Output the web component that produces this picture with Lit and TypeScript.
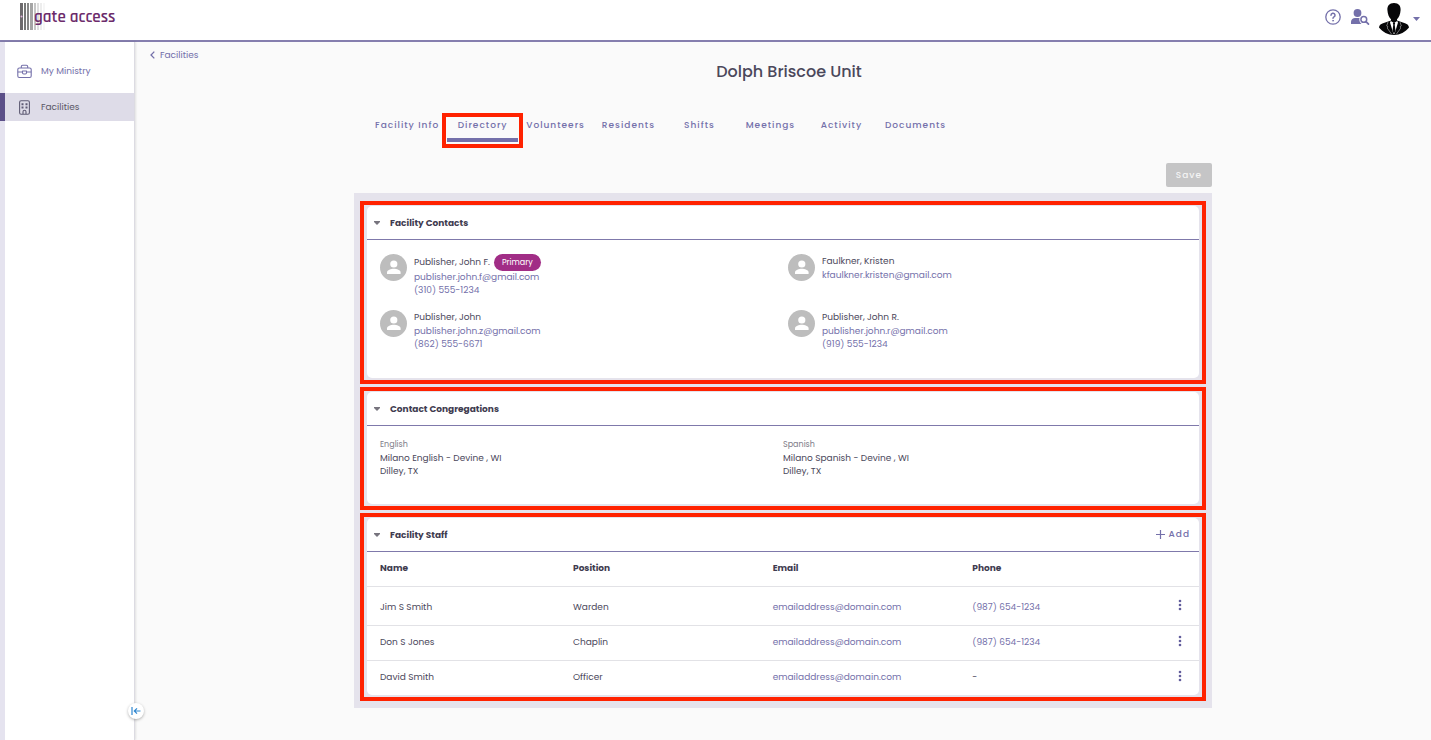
import { LitElement, html, css, svg, nothing } from "lit";
import { customElement, property, state } from "lit/decorators.js";
import { classMap } from "lit/directives/class-map.js";

interface Contact {
  name: string;
  email: string;
  phone?: string;
  primary?: boolean;
}

const contacts: Contact[] = [
  { name: "Publisher, John F.", email: "publisher.john.f@gmail.com", phone: "(310) 555-1234", primary: true },
  { name: "Faulkner, Kristen", email: "kfaulkner.kristen@gmail.com" },
  { name: "Publisher, John", email: "publisher.john.z@gmail.com", phone: "(862) 555-6671" },
  { name: "Publisher, John R.", email: "publisher.john.r@gmail.com", phone: "(919) 555-1234" },
];

const congregations = [
  { language: "English", name: "Milano English - Devine , WI", city: "Dilley, TX" },
  { language: "Spanish", name: "Milano Spanish - Devine , WI", city: "Dilley, TX" },
];

const staff = [
  { name: "Jim S Smith", position: "Warden", email: "emailaddress@domain.com", phone: "(987) 654-1234" },
  { name: "Don S Jones", position: "Chaplin", email: "emailaddress@domain.com", phone: "(987) 654-1234" },
  { name: "David Smith", position: "Officer", email: "emailaddress@domain.com", phone: "" },
];

const tabs = ["Facility Info", "Directory", "Volunteers", "Residents", "Shifts", "Meetings", "Activity", "Documents"];

const tel = (phone: string) => "tel:" + phone.replace(/\D/g, "");

const base = css`
  * { box-sizing: border-box; }
  a { color: #7470aa; text-decoration: none; }
  button {
    margin: 0;
    padding: 0;
    border: 0;
    background: none;
    color: #7470aa;
    font: inherit;
    cursor: pointer;
  }
  svg { display: block; }
`;

@customElement("app-header")
class AppHeader extends LitElement {
  static styles = [base, css`
    :host {
      display: flex;
      align-items: flex-start;
      justify-content: space-between;
      height: 42px;
      padding: 3px 11px 0 20px;
      background: #fff;
      border-bottom: 2px solid #857eae;
    }
    .logo { display: flex; align-items: center; }
    .bars { margin-right: -12px; }
    .word {
      z-index: 1;
      color: #6c2b6b;
      font: 600 17px/26px "Rajdhani", "Roboto Condensed", "DejaVu Sans Condensed", sans-serif;
    }
    .actions { display: flex; align-items: flex-start; }
    .help { margin: 6px 9px 0 0; }
    .search { margin: 5px 9px 0 0; }
    .profile { display: flex; align-items: center; gap: 4px; }
  `];

  render() {
    return html`
      <a class="logo" href="#" aria-label="gate access">
        <svg class="bars" width="26" height="27" viewBox="0 0 26 27">
          <rect x="0" width="3" height="27" fill="#6d6a6d" />
          <rect x="4" width="2" height="27" fill="#777" />
          <rect x="7" width="2" height="27" fill="#868686" />
          <rect x="10" width="3" height="27" fill="#a5a5a5" />
          <rect x="14" width="2" height="27" fill="#c6c6c6" />
          <rect x="17" width="2" height="27" fill="#dedede" />
          <rect x="20" width="2" height="27" fill="#ededed" />
          <rect x="23" width="2" height="27" fill="#f6f6f6" />
          <circle cx="1.5" cy="13.500" r="1" fill="#e3b6df" />
        </svg>
        <span class="word">gate access</span>
      </a>
      <div class="actions">
        <button class="help" aria-label="Help">
          <svg width="16" height="16" viewBox="0 0 16 16" fill="none" stroke="#7470aa" stroke-linecap="round">
            <circle cx="8" cy="8" r="7.200" stroke-width="1.300" />
            <path d="M6 6.200a2 2 0 1 1 3 1.700c-.7.4-1 .8-1 1.400" stroke-width="1.500" />
            <circle cx="8" cy="11.700" r=".5" fill="#7470aa" stroke-width=".7" />
          </svg>
        </button>
        <button class="search" aria-label="Find person">
          <svg width="20" height="18" viewBox="0 0 20 18">
            <circle cx="7.500" cy="5" r="3.900" fill="#7470aa" />
            <path d="M1 16v-2.200C1 11.300 3 10 5 10h4.500c-.6 2.300.2 4.500 2 6z" fill="#7470aa" />
            <circle cx="13.800" cy="11.400" r="2.900" fill="#fff" stroke="#7470aa" stroke-width="1.500" />
            <path d="m16 13.600 2.500 2.500" stroke="#7470aa" stroke-width="1.700" stroke-linecap="round" />
          </svg>
        </button>
        <button class="profile" aria-label="Account menu">
          <svg width="30" height="32" viewBox="0 0 30 32">
            <path d="M15 0c-4.800 0-6.800 3.200-6.600 7 .2 4.500 1.800 7.500 3.600 9.200v1.300L4 20.200C1.500 21 .3 22.300 0 24.500 3.500 29 9 32 15 32s11.500-3 15-7.500c-.3-2.200-1.500-3.500-4-4.300l-8-2.700v-1.300c1.800-1.700 3.400-4.700 3.600-9.200.2-3.800-1.800-7-6.600-7z" fill="#060608" />
            <path d="M11.800 18 15 20l3.200-2 .8 1.500L15.500 31h-1L11 19.500z" fill="#fff" />
            <path d="m13.800 20 1.200-.6 1.200.6-.5 1.700.8 6L15 31l-1.500-3.300.8-6z" fill="#060608" />
            <path d="m9 19-1.300 4 1.300.8-.8 1.200 4.300 6M21 19l1.300 4-1.300.8.800 1.200-4.300 6" fill="none" stroke="#d8d8d8" stroke-width=".5" />
          </svg>
          <svg width="7" height="4" viewBox="0 0 7 4"><path d="M0 0h7L3.500 4z" fill="#7470aa" /></svg>
        </button>
      </div>
    `;
  }
}

@customElement("app-sidebar")
class AppSidebar extends LitElement {
  static styles = [base, css`
    :host {
      display: block;
      position: relative;
      background: #fff;
      border-right: 1px solid #dcdbe2;
      box-shadow: 1px 0 2px #0000001a;
    }
    nav {
      display: flex;
      flex-direction: column;
      gap: 8px;
      height: 100%;
      padding-top: 15px;
      background: linear-gradient(90deg, #e5e3ef 5px, transparent 5px);
    }
    .item {
      display: flex;
      align-items: center;
      gap: 9px;
      height: 28px;
      padding-left: 12px;
      border-left: 5px solid transparent;
    }
    .item.on { background: #dedce8; border-color: #5b4f88; color: #5a5766; }
    .collapse {
      position: absolute;
      right: -10px;
      bottom: 21px;
      display: grid;
      place-items: center;
      width: 16px;
      height: 16px;
      border-radius: 50%;
      background: #fff;
      box-shadow: 0 1px 3px #0000004d;
    }
  `];

  render() {
    return html`
      <nav>
        <a class="item" href="#ministry">
          <svg width="15" height="15" viewBox="0 0 15 15" fill="none" stroke="#7470aa" stroke-width="1.100" stroke-linejoin="round">
            <rect x=".8" y="4" width="13.400" height="9.500" rx="1.500" />
            <path d="M4.300 4V2.600c0-.8.5-1.300 1.300-1.300h3.800c.8 0 1.300.5 1.300 1.300V4M.8 8h4.700M9.500 8h4.700M5.500 7h4v1.800c0 .8-.5 1.200-1.200 1.200H6.700c-.7 0-1.200-.4-1.200-1.200z" />
          </svg>
          My Ministry
        </a>
        <a class="item on" href="#facilities">
          <svg width="15" height="15" viewBox="0 0 15 15" fill="none" stroke="#5f5b74">
            <rect x="2.600" y=".8" width="9.800" height="13.400" rx="1.500" stroke-width="1.100" />
            <path d="M6 14v-2.200a1.500 1.500 0 0 1 3 0V14" stroke-width="1.100" />
            <path d="M4.500 4.200h2M8.500 4.200h2M4.500 7.600h2M8.500 7.600h2" stroke-width="2" />
          </svg>
          Facilities
        </a>
      </nav>
      <button class="collapse" aria-label="Collapse menu">
        <svg width="10" height="8" viewBox="0 0 10 8" fill="none" stroke="#2f87d0" stroke-width="1.200">
          <path d="M1 0v8M9.500 4h-6M6 1.300 3.300 4 6 6.700" />
        </svg>
      </button>
    `;
  }
}

@customElement("info-card")
class InfoCard extends LitElement {
  @property() heading = "";
  @property({ type: Boolean }) addable = false;
  @state() private open = true;

  static styles = [base, css`
    :host {
      display: block;
      padding: 1px 3px 2px;
      border: 4px solid #ff2200;
    }
    .card { background: #fff; border-radius: 5px; overflow: hidden; }
    header {
      display: flex;
      align-items: center;
      justify-content: space-between;
      height: 34px;
      padding: 0 9px 0 7px;
      border-bottom: 1px solid #7f79ab;
    }
    h2 { margin: 0; font-size: 9px; line-height: 16px; font-weight: 700; }
    .toggle { display: flex; align-items: center; gap: 10px; color: #3f3c50; }
    .add { display: flex; align-items: center; gap: 4px; letter-spacing: 1px; font-weight: 500; }
  `];

  render() {
    return html`
      <section class="card">
        <header>
          <h2>
            <button class="toggle" aria-expanded=${this.open} @click=${() => (this.open = !this.open)}>
              <svg width="6" height="4" viewBox="0 0 6 4"><path d="M0 0h6v1L3 4 0 1z" fill="#77747e" /></svg>
              ${this.heading}
            </button>
          </h2>
          ${this.addable
            ? html`<button class="add">
                <svg width="9" height="9" viewBox="0 0 9 9" stroke="#7470aa" stroke-width="1.200"><path d="M4.500 0v9M0 4.500h9" /></svg>
                Add
              </button>`
            : nothing}
        </header>
        ${this.open ? html`<slot></slot>` : nothing}
      </section>
    `;
  }
}

@customElement("app-root")
class AppRoot extends LitElement {
  @state() private active = "Directory";

  static styles = [base, css`
    :host {
      display: grid;
      grid-template-rows: auto 1fr;
      grid-template-columns: 135px 1fr;
      min-height: 100vh;
      background: #fafafa;
      color: #4b485b;
      font: 9px/13px Poppins, Inter, "Open Sans", sans-serif;
    }
    app-header { grid-column: 1 / -1; }
    main { padding: 6px 15px 24px; }
    .crumb { display: flex; width: fit-content; align-items: center; gap: 5px; height: 14px; }
    h1 {
      margin: 0 0 30px;
      padding-left: 12px;
      font-size: 16px;
      line-height: 20px;
      font-weight: 500;
      text-align: center;
    }
    .content { max-width: 858px; margin: 0 auto; }
    .tabs { display: flex; height: 30px; padding-left: 13px; }
    .tab {
      position: relative;
      min-width: 71px;
      padding: 0 8px;
      border-bottom: 4px solid transparent;
      font-weight: 500;
      letter-spacing: 1px;
      white-space: nowrap;
    }
    .tab.on { border-color: #7470aa; }
    .tab.on::after {
      content: "";
      position: absolute;
      inset: 1px -5px -10px;
      border: 4px solid #ff2200;
    }
    .bar { display: flex; justify-content: flex-end; margin: 21px 0 6px; }
    .save {
      height: 24px;
      padding: 0 10px;
      border-radius: 2px;
      background: #c5c5c6;
      color: #f4f4f4;
      font-weight: 500;
      letter-spacing: 1px;
    }
    .panel {
      display: flex;
      flex-direction: column;
      gap: 3px;
      padding: 8px 6px 7px;
      background: #e5e3ec;
    }
    .contacts {
      display: grid;
      grid-template-columns: 1fr 1fr;
      gap: 13px 10px;
      padding: 14px 13px 27px;
    }
    .contact { display: flex; align-items: flex-start; gap: 7px; }
    .lines { display: flex; flex-direction: column; align-items: flex-start; }
    .who { display: flex; align-items: center; gap: 4px; min-height: 15px; }
    .badge {
      padding: 0 8px;
      border-radius: 9px;
      background: #a12d86;
      color: #fff;
      font-size: 8px;
      line-height: 17px;
    }
    .congs { display: grid; grid-template-columns: 1fr 1fr; padding: 12px 13px 26px; }
    .lang { color: #7e7c88; font-size: 8px; line-height: 14px; }
    table { width: 100%; border-collapse: collapse; table-layout: fixed; }
    th, td { height: 35px; padding: 0 0 0 13px; text-align: left; border-top: 1px solid #e2e2e6; }
    th { height: 34px; border-top: 0; font-weight: 700; color: #3f3c50; }
    .first td { height: 39px; padding-top: 3px; }
    .c1 { width: 23.2%; }
    .c2 { width: 24%; }
    .menu { display: block; padding: 0 6px 4px; }
  `];

  private contact(c: Contact) {
    return html`
      <div class="contact">
        <svg width="27" height="27" viewBox="0 0 27 27">
          <circle cx="13.500" cy="13.500" r="13.500" fill="#bdbdbd" />
          <circle cx="13.800" cy="10" r="3.600" fill="#fff" />
          <path d="M7 20v-1.500c0-2.500 4-3.700 6.800-3.700s6.800 1.200 6.800 3.700V20z" fill="#fff" />
        </svg>
        <div class="lines">
          <div class="who">${c.name}${c.primary ? html`<span class="badge">Primary</span>` : nothing}</div>
          <a href="mailto:${c.email}">${c.email}</a>
          ${c.phone ? html`<a href=${tel(c.phone)}>${c.phone}</a>` : nothing}
        </div>
      </div>
    `;
  }

  render() {
    return html`
      <app-header></app-header>
      <app-sidebar></app-sidebar>
      <main>
        <a class="crumb" href="#facilities">
          <svg width="5" height="8" viewBox="0 0 5 8" fill="none" stroke="#7470aa" stroke-width="1.300"><path d="M4.300.6 1 4l3.300 3.400" /></svg>
          Facilities
        </a>
        <h1>Dolph Briscoe Unit</h1>
        <div class="content">
          <div class="tabs" role="tablist">
            ${tabs.map((t) => html`
              <button
                role="tab"
                aria-selected=${t === this.active}
                class=${classMap({ tab: true, on: t === this.active })}
                @click=${() => (this.active = t)}
              >${t}</button>
            `)}
          </div>
          <div class="bar"><button class="save" disabled>Save</button></div>
          <div class="panel">
            <info-card heading="Facility Contacts">
              <div class="contacts">${contacts.map((c) => this.contact(c))}</div>
            </info-card>
            <info-card heading="Contact Congregations">
              <div class="congs">
                ${congregations.map((c) => html`
                  <div>
                    <div class="lang">${c.language}</div>
                    <div>${c.name}</div>
                    <div>${c.city}</div>
                  </div>
                `)}
              </div>
            </info-card>
            <info-card heading="Facility Staff" addable>
              <table>
                <colgroup><col class="c1" /><col class="c2" /><col class="c2" /><col class="c2" /><col /></colgroup>
                <thead>
                  <tr><th>Name</th><th>Position</th><th>Email</th><th>Phone</th><th></th></tr>
                </thead>
                <tbody>
                  ${staff.map((s, i) => html`
                    <tr class=${classMap({ first: i === 0 })}>
                      <td>${s.name}</td>
                      <td>${s.position}</td>
                      <td><a href="mailto:${s.email}">${s.email}</a></td>
                      <td>${s.phone ? html`<a href=${tel(s.phone)}>${s.phone}</a>` : "-"}</td>
                      <td>
                        <button class="menu" aria-label="Actions for ${s.name}">
                          <svg width="4" height="12" viewBox="0 0 4 12" fill="#625d9c">
                            ${[2, 6, 10].map((y) => svg`<circle cx="2" cy=${y} r="1.300" />`)}
                          </svg>
                        </button>
                      </td>
                    </tr>
                  `)}
                </tbody>
              </table>
            </info-card>
          </div>
        </div>
      </main>
    `;
  }
}
